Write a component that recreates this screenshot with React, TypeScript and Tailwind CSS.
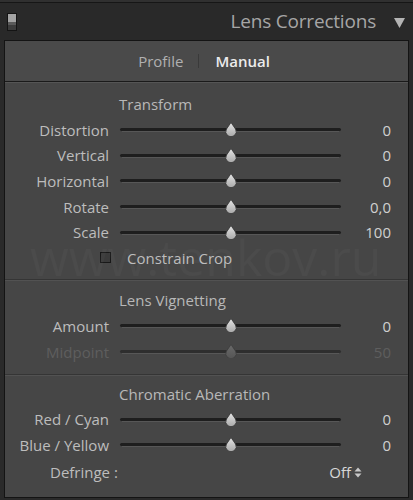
import React from "react";

const font = { fontFamily: '"Open Sans", "Noto Sans", Arial, sans-serif' };

function Thumb({ dim }: { dim?: boolean }) {
  return (
    <svg width="13" height="14" viewBox="0 0 13 14" className="absolute left-1/2 -translate-x-1/2 -top-[6px]">
      <defs>
        <linearGradient id={dim ? "tgd" : "tg"} x1="0" y1="0" x2="0" y2="1">
          <stop offset="0" stopColor={dim ? "#6a6a6a" : "#e6e6e6"} />
          <stop offset="1" stopColor={dim ? "#555555" : "#a8a8a8"} />
        </linearGradient>
      </defs>
      <path d="M6.5 0.5 L11 7 A5.2 5.2 0 1 1 2 7 Z" fill={`url(#${dim ? "tgd" : "tg"})`} stroke={dim ? "#3c3c3c" : "#2e2e2e"} strokeWidth="0.8" />
    </svg>
  );
}

function Slider({ label, value, dim }: { label: string; value: string; dim?: boolean }) {
  return (
    <div className="flex items-center h-[25.7px]">
      <div className={`w-[104px] text-right text-[15px] ${dim ? "text-[#5e5e5e]" : "text-[#bdbdbd]"}`}>{label}</div>
      <div className="ml-[11px] w-[221px] relative h-[4px]">
        <div className={`absolute inset-x-0 top-0 h-[3px] rounded-full ${dim ? "bg-[#2e2e2e]" : "bg-[#1e1e1e]"}`} />
        <div className="absolute inset-x-[2px] top-[3px] h-[1px] bg-[#575757]" />
        <div className="absolute left-[111px] top-0">
          <Thumb dim={dim} />
        </div>
      </div>
      <div className={`flex-1 text-right pr-[17px] text-[15px] ${dim ? "text-[#5e5e5e]" : "text-[#d0d0d0]"}`}>{value}</div>
    </div>
  );
}

function Title({ children }: { children: React.ReactNode }) {
  return <div className="pl-[114px] text-[15px] text-[#b8b8b8] h-[26px] flex items-center">{children}</div>;
}

function Sep() {
  return (
    <div>
      <div className="h-[1px] bg-[#353535]" />
      <div className="h-[1px] bg-[#525252]" />
    </div>
  );
}

export default function App() {
  return (
    <div className="w-[413px] h-[500px] bg-[#2a2a2a] relative overflow-hidden select-none" style={font}>
      <div className="h-[2px] bg-[#303030]" />
      <div className="h-[1px] bg-[#161616]" />
      <div className="h-[37px] bg-[#292929] flex items-center relative">
        <div className="absolute left-[7px] top-[10px] w-[10px] h-[18px] border border-[#141414] flex flex-col">
          <div className="h-[8px] bg-[#a3a3a3]" />
          <div className="h-[3px] bg-[#5a5a5a]" />
          <div className="flex-1 bg-[#3c3c3c]" />
        </div>
        <div className="ml-auto text-[19px] text-[#a6a6a6] tracking-[-0.2px] mr-[18px]">Lens Corrections</div>
        <svg width="11" height="11" viewBox="0 0 11 11" className="mr-[8px] mt-[1px]">
          <path d="M0 1 L11 1 L5.5 11 Z" fill="#b4b4b4" />
        </svg>
      </div>
      <div className="ml-[4px] w-[405px] h-[458px] border border-[#141414] bg-[#464646] flex flex-col">
        <div className="h-[40px] flex items-center justify-center text-[15px] bg-[#4a4a4a]">
          <span className="text-[#b0b0b0] mr-[15px] ml-[-5px]">Profile</span>
          <span className="w-[1px] h-[14px] bg-[#3a3a3a]" />
          <span className="text-[#ececec] ml-[16px] font-semibold">Manual</span>
        </div>
        <div className="h-[1px] bg-[#1a1a1a]" />
        <div className="h-[1px] bg-[#555555]" />
        <div className="pt-[8px] pb-[9px]">
          <Title>Transform</Title>
          <Slider label="Distortion" value="0" />
          <Slider label="Vertical" value="0" />
          <Slider label="Horizontal" value="0" />
          <Slider label="Rotate" value="0,0" />
          <Slider label="Scale" value="100" />
          <div className="flex items-center h-[25px]">
            <div className="ml-[95px] w-[11px] h-[11px] border border-[#181818] bg-[#3a3a3a]" />
            <span className="ml-[16px] text-[15px] text-[#bdbdbd]">Constrain Crop</span>
          </div>
        </div>
        <Sep />
        <div className="pt-[6px] pb-[9px]">
          <Title>Lens Vignetting</Title>
          <Slider label="Amount" value="0" />
          <Slider label="Midpoint" value="50" dim />
        </div>
        <Sep />
        <div className="pt-[5px]">
          <Title>Chromatic Aberration</Title>
          <Slider label="Red / Cyan" value="0" />
          <Slider label="Blue / Yellow" value="0" />
          <div className="flex items-center h-[28px]">
            <div className="w-[120px] pl-[45px] text-[15px] text-[#bdbdbd]">Defringe :</div>
            <div className="ml-auto mr-[46px] flex items-center text-[15px] text-[#d8d8d8]">
              Off
              <svg width="8" height="11" viewBox="0 0 8 11" className="ml-[3px]">
                <path d="M0.5 4.5 L4 0.5 L7.5 4.5 Z M0.5 6.5 L4 10.5 L7.5 6.5 Z" fill="#c8c8c8" />
              </svg>
            </div>
          </div>
        </div>
      </div>
      <div className="absolute left-[30px] top-[220px] text-[50px] text-white opacity-[0.025] pointer-events-none whitespace-nowrap">www.tenkov.ru</div>
    </div>
  );
}
